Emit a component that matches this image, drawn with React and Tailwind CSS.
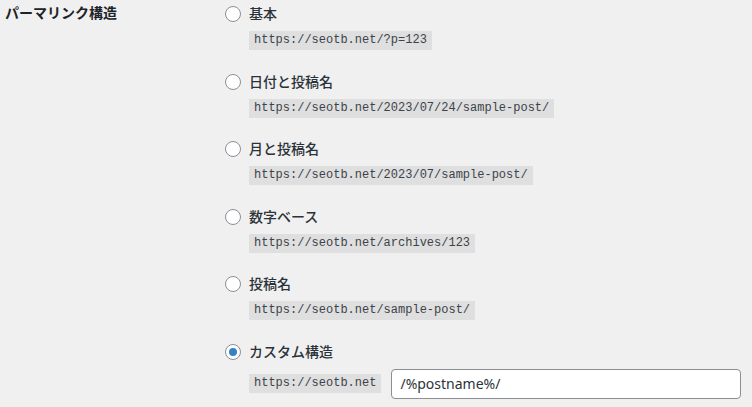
import React from "react";

const options = [
  { label: "基本", code: "https://seotb.net/?p=123" },
  { label: "日付と投稿名", code: "https://seotb.net/2023/07/24/sample-post/" },
  { label: "月と投稿名", code: "https://seotb.net/2023/07/sample-post/" },
  { label: "数字ベース", code: "https://seotb.net/archives/123" },
  { label: "投稿名", code: "https://seotb.net/sample-post/" },
];

const jp = { fontFamily: '"Noto Sans", "Noto Sans CJK JP", sans-serif' };
const mono = { fontFamily: '"Liberation Mono", monospace' };

function Radio({ checked }) {
  return (
    <span className="w-4 h-4 rounded-full border border-[#8c8f94] bg-white flex items-center justify-center shrink-0">
      {checked && <span className="w-2 h-2 rounded-full bg-[#3582c4]" />}
    </span>
  );
}

function Code({ children }) {
  return (
    <code
      className="inline-block px-[5px] h-[19px] leading-[19px] text-[12px] bg-[#dfdfe0] text-[#3c434a]"
      style={mono}
    >
      {children}
    </code>
  );
}

export default function App() {
  return (
    <div className="w-[752px] h-[407px] bg-[#f0f0f1] flex overflow-hidden text-[#1d2327]" style={jp}>
      <div className="w-[220px] shrink-0 pl-[5px] pt-[3px] text-[14px] leading-[20px] font-bold">
        パーマリンク構造
      </div>
      <div className="flex-1 pt-[4px] pr-[11px]">
        {options.map((o) => (
          <div key={o.label} className="mb-[21.6px]">
            <div className="flex items-center gap-2 h-5 pl-[5px]">
              <Radio />
              <span className="text-[14px] font-medium leading-[20px] text-[#2c3338]">{o.label}</span>
            </div>
            <div className="mt-[7px] pl-[29px] flex">
              <Code>{o.code}</Code>
            </div>
          </div>
        ))}
        <div>
          <div className="flex items-center gap-2 h-5 pl-[5px]">
            <Radio checked />
            <span className="text-[14px] font-medium leading-[20px] text-[#2c3338]">カスタム構造</span>
          </div>
          <div className="mt-[7px] pl-[29px] flex items-center gap-[10px]">
            <Code>https://seotb.net</Code>
            <div className="flex-1 h-[30px] rounded-[4px] border border-[#8c8f94] bg-white flex items-center pl-[8px] text-[14px] text-[#2c3338]">
              /%postname%/
            </div>
          </div>
        </div>
      </div>
    </div>
  );
}
